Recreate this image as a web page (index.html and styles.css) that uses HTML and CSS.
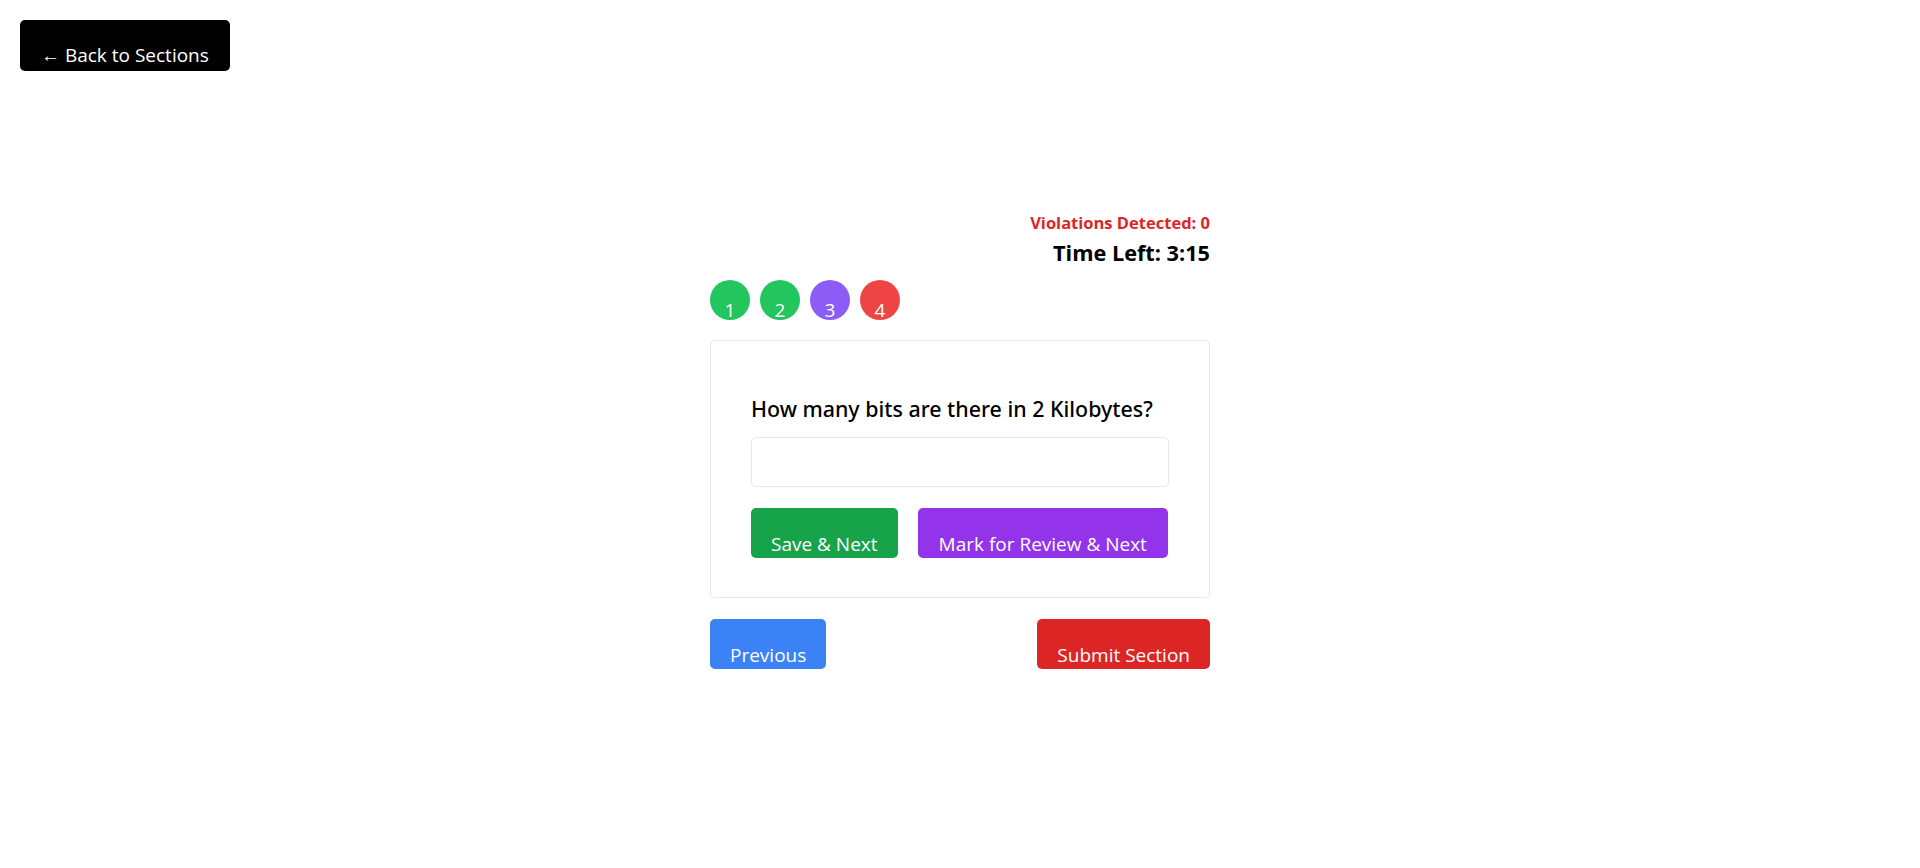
FILE: index.html
```html
<!DOCTYPE html>
<html lang="en">
<head>
<meta charset="utf-8">
<title>Section Test</title>
<link rel="stylesheet" href="styles.css">
</head>
<body>
<button class="back-btn">← Back to Sections</button>
<main class="exam">
  <div class="violations">Violations Detected: 0</div>
  <div class="timer">Time Left: 3:15</div>
  <div class="palette">
    <span class="q-dot answered">1</span>
    <span class="q-dot answered">2</span>
    <span class="q-dot review">3</span>
    <span class="q-dot unanswered">4</span>
  </div>
  <section class="card">
    <p class="question">How many bits are there in 2 Kilobytes?</p>
    <input class="answer" type="text">
    <div class="actions">
      <button class="btn btn-save">Save &amp; Next</button>
      <button class="btn btn-review">Mark for Review &amp; Next</button>
    </div>
  </section>
  <div class="nav">
    <button class="btn btn-prev">Previous</button>
    <button class="btn btn-submit">Submit Section</button>
  </div>
</main>
</body>
</html>
```
FILE: styles.css
```css
* { box-sizing: border-box; }
body {
  margin: 0;
  font-family: "Open Sans", "Noto Sans", sans-serif;
  color: #000;
  background: #fff;
}
button { font-family: inherit; border: none; cursor: pointer; }

.back-btn {
  display: block;
  margin: 20px 0 0 20px;
  height: 51px;
  padding: 20px 21px 0;
  font-size: 19px;
  line-height: 27px;
  background: #000;
  color: #fff;
  border-radius: 5px;
  text-align: left;
}

.exam {
  width: 500px;
  margin: 140px auto 0;
}
.violations {
  text-align: right;
  font-size: 16.5px;
  font-weight: 700;
  line-height: 24px;
  color: #dc2626;
}
.timer {
  margin-top: 3px;
  text-align: right;
  font-size: 21.7px;
  font-weight: 700;
  line-height: 30px;
}
.palette {
  display: flex;
  gap: 10px;
  margin-top: 12px;
}
.q-dot {
  width: 40px;
  height: 40px;
  border-radius: 50%;
  color: #fff;
  font-size: 19px;
  line-height: 26px;
  padding-top: 17px;
  text-align: center;
}
.answered { background: #22c55e; }
.review { background: #8b5cf6; }
.unanswered { background: #ef4444; }

.card {
  margin-top: 20px;
  border: 1px solid #e5e7eb;
  border-radius: 5px;
  padding: 40px 40px 39px;
}
.question {
  margin: 0;
  padding-top: 13px;
  font-family: "Noto Sans", "Open Sans", sans-serif;
  font-size: 21.4px;
  font-weight: 500;
  line-height: 29px;
}
.answer {
  display: block;
  width: 100%;
  height: 50px;
  margin-top: 14px;
  border: 1px solid #e5e7eb;
  border-radius: 5px;
  font-family: inherit;
  font-size: 19px;
  padding: 0 12px;
}
.actions {
  display: flex;
  gap: 20px;
  margin-top: 21px;
}
.btn {
  height: 50px;
  padding: 22px 20px 0;
  font-size: 19px;
  line-height: 26px;
  color: #fff;
  border-radius: 5px;
  white-space: nowrap;
}
.btn-review { padding: 22px 21px 0; }
.btn-save { background: #16a34a; }
.btn-review { background: #9333ea; }
.btn-prev { background: #3b82f6; }
.btn-submit { background: #dc2626; }

.nav {
  display: flex;
  justify-content: space-between;
  margin-top: 21px;
}
```
